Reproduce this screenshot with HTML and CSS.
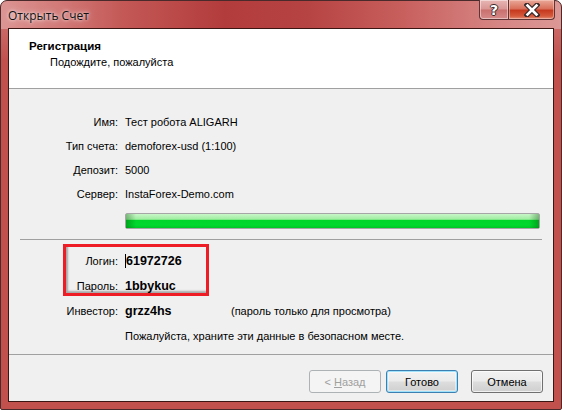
FILE: index.html
```html
<!DOCTYPE html>
<html lang="ru">
<head>
<meta charset="utf-8">
<title>Открыть Счет</title>
<link rel="stylesheet" href="styles.css">
</head>
<body>
<div class="window">
  <div class="titlebar">
    <span class="title">Открыть Счет</span>
    <div class="caption-btns">
      <div class="cbtn help">?</div>
      <div class="cbtn close">
        <svg width="16" height="14" viewBox="0 0 16 14">
          <path d="M3 2 L13 12 M13 2 L3 12" stroke="#3a2a2a" stroke-width="5" stroke-linecap="square"/>
          <path d="M3.5 2.5 L12.5 11.5 M12.5 2.5 L3.5 11.5" stroke="#ffffff" stroke-width="2.6" stroke-linecap="square"/>
        </svg>
      </div>
    </div>
  </div>
  <div class="client">
    <div class="header">
      <div class="h-title">Регистрация</div>
      <div class="h-sub">Подождите, пожалуйста</div>
    </div>
    <div class="content">
      <div class="rows">
        <div class="row"><span class="label">Имя:</span><span class="value">Тест робота ALIGARH</span></div>
        <div class="row"><span class="label">Тип счета:</span><span class="value">demoforex-usd (1:100)</span></div>
        <div class="row"><span class="label">Депозит:</span><span class="value">5000</span></div>
        <div class="row"><span class="label">Сервер:</span><span class="value">InstaForex-Demo.com</span></div>
      </div>
      <div class="progress"><div class="bar"></div></div>
      <div class="sep"></div>
      <div class="rows creds">
        <div class="row tall"><span class="label">Логин:</span><span class="value bold"><span class="caret"></span>61972726</span></div>
        <div class="row tall"><span class="label">Пароль:</span><span class="value bold">1bbykuc</span></div>
        <div class="row tall"><span class="label">Инвестор:</span><span class="value bold narrow">grzz4hs</span><span class="note">(пароль только для просмотра)</span></div>
        <div class="row tall"><span class="label"></span><span class="value">Пожалуйста, храните эти данные в безопасном месте.</span></div>
        <div class="highlight"></div>
      </div>
    </div>
    <div class="footer">
      <button class="btn disabled">&lt; <u>Н</u>азад</button>
      <button class="btn default">Готово</button>
      <button class="btn cancel">Отмена</button>
    </div>
  </div>
</div>
</body>
</html>
```
FILE: styles.css
```css
* { box-sizing: border-box; }
html, body { margin: 0; padding: 0; }
body {
  width: 562px;
  height: 410px;
  overflow: hidden;
  font-family: "Liberation Sans", Arial, sans-serif;
  font-size: 11px;
  color: #000;
  background: #fff;
}
.window {
  width: 562px;
  height: 410px;
  display: flex;
  flex-direction: column;
  padding: 0 7px 7px 7px;
  border-radius: 7px 7px 2px 2px;
  border: 1px solid #4a2a2a;
  background:
    linear-gradient(90deg, #dc9593 0%, #d27b79 10%, #c35856 22%, #b23c3b 40%, #b64443 55%, #c8605e 72%, #d58482 88%, #dc9896 100%) top / 100% 28px no-repeat,
    linear-gradient(180deg, rgba(255,255,255,0.25), rgba(255,255,255,0) 60px) top / 100% 90px no-repeat,
    #c2514e;
  position: relative;
}
.titlebar {
  height: 27px;
  flex: 0 0 27px;
  display: flex;
  justify-content: space-between;
  align-items: flex-start;
}
.title {
  font-family: "Open Sans", "Noto Sans", sans-serif;
  font-size: 12px;
  line-height: 14px;
  padding-top: 8px;
  color: #111;
  text-shadow: 0 0 6px rgba(255,255,255,0.8), 0 0 3px rgba(255,255,255,0.8);
}
.caption-btns {
  display: flex;
  margin-top: -1px;
  margin-right: -1px;
}
.cbtn {
  height: 20px;
  display: flex;
  align-items: center;
  justify-content: center;
  border: 1px solid #5e3434;
  border-top: none;
}
.help {
  width: 29px;
  border-right: none;
  border-radius: 0 0 0 4px;
  background: linear-gradient(180deg, #e7b7b5 0%, #d99593 48%, #c9706e 52%, #d58a88 100%);
  box-shadow: inset 0 0 0 1px rgba(255,255,255,0.45);
  color: #fff;
  font-family: "DejaVu Sans", sans-serif;
  font-weight: bold;
  font-size: 14px;
  text-shadow: 1px 0 0 #3a2a2a, -1px 0 0 #3a2a2a, 0 1px 0 #3a2a2a, 0 -1px 0 #3a2a2a;
}
.close {
  width: 47px;
  border-radius: 0 0 4px 0;
  background: linear-gradient(180deg, #e9a898 0%, #d9705c 45%, #c63a20 55%, #d65a3c 85%, #e0907a 100%);
  box-shadow: inset 0 0 0 1px rgba(255,220,210,0.45);
}
.client {
  flex: 1;
  border: 1px solid #3c1612;
  background: #f0f0f0;
  display: flex;
  flex-direction: column;
}
.header {
  height: 60px;
  flex: 0 0 60px;
  background: #fff;
  border-bottom: 1px solid #a0a0a0;
  padding-top: 9px;
}
.h-title {
  font-weight: bold;
  font-size: 11.5px;
  line-height: 16px;
  padding-left: 20px;
}
.h-sub {
  line-height: 16px;
  padding-left: 41px;
}
.content {
  flex: 1;
  border-bottom: 1px solid #a0a0a0;
  padding-top: 21px;
}
.rows { display: flex; flex-direction: column; }
.row {
  height: 24px;
  display: flex;
  align-items: center;
}
.row.tall { height: 25px; }
.label {
  width: 109px;
  text-align: right;
  margin-right: 7px;
  flex: 0 0 109px;
}
.value { white-space: nowrap; }
.bold {
  font-weight: bold;
  font-size: 12.5px;
  display: flex;
  align-items: center;
}
.narrow { width: 106px; }
.caret {
  display: inline-block;
  width: 1px;
  height: 14px;
  background: #000;
  margin-right: 0;
}
.progress {
  margin: 7px 13px 0 116px;
  height: 16px;
  border: 1px solid #a6a6a6;
  border-radius: 2px;
  background: #e6e6e6;
  padding: 0;
}
.bar {
  width: 100%;
  height: 100%;
  background:
    linear-gradient(90deg, rgba(0,70,0,0.35) 0, rgba(0,70,0,0) 10px, rgba(0,70,0,0) calc(100% - 10px), rgba(0,70,0,0.35) 100%),
    linear-gradient(180deg, #c9f6c9 0%, #9eeda0 38%, #00d52a 45%, #00d92e 80%, #00c526 100%);
}
.sep {
  margin: 10px 11px 0 11px;
  height: 1px;
  background: #a0a0a0;
}
.creds {
  margin-top: 8px;
  position: relative;
}
.note { white-space: nowrap; }
.highlight {
  position: absolute;
  left: 54px;
  top: -4px;
  width: 146px;
  height: 52px;
  border: 3px solid #ee1c24;
  box-shadow: inset 2px -2px 2px rgba(0,0,0,0.3);
}
.footer {
  height: 46px;
  flex: 0 0 46px;
  display: flex;
  justify-content: flex-end;
  align-items: flex-start;
  padding: 15px 10px 0 0;
}
.btn {
  width: 72px;
  height: 23px;
  font-family: "Liberation Sans", Arial, sans-serif;
  font-size: 11px;
  color: #000;
  border: 1px solid #707070;
  border-radius: 3px;
  background: linear-gradient(180deg, #f2f2f2 0%, #ebebeb 48%, #dddddd 52%, #cfcfcf 100%);
  box-shadow: inset 0 0 0 1px rgba(255,255,255,0.7);
  padding: 0;
  margin: 0;
}
.btn.disabled {
  color: #a0a0a0;
  border-color: #adb2b5;
  background: #f4f4f4;
  box-shadow: none;
  margin-right: 5px;
}
.btn.disabled u { text-decoration: underline; }
.btn.default {
  border-color: #3c7fb1;
  box-shadow: inset 0 0 0 1px #9ee2fb, inset 0 0 0 2px rgba(255,255,255,0.4);
  margin-right: 13px;
}
```
